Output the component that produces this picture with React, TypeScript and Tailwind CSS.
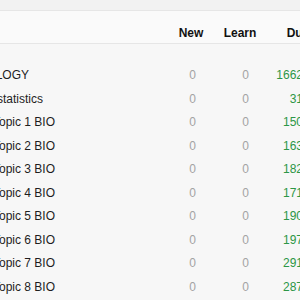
const decks = [
  { name: "BIOLOGY", shift: "ml-[-25px]", due: 1662 },
  { name: "statistics", shift: "ml-[-3px]", due: 31 },
  { name: "Topic 1 BIO", shift: "ml-[-7px]", due: 150 },
  { name: "Topic 2 BIO", shift: "ml-[-7px]", due: 163 },
  { name: "Topic 3 BIO", shift: "ml-[-7px]", due: 182 },
  { name: "Topic 4 BIO", shift: "ml-[-7px]", due: 171 },
  { name: "Topic 5 BIO", shift: "ml-[-7px]", due: 190 },
  { name: "Topic 6 BIO", shift: "ml-[-7px]", due: 197 },
  { name: "Topic 7 BIO", shift: "ml-[-7px]", due: 291 },
  { name: "Topic 8 BIO", shift: "ml-[-7px]", due: 287 },
];

export default function App() {
  return (
    <div className="h-[300px] w-[300px] overflow-hidden bg-[#f7f7f7] font-['Liberation_Sans',Arial,sans-serif] text-[12px] text-[#1e1e1e]">
      <div className="h-[10px] bg-[#f2f2f2]" />

      {/* column headers */}
      <div className="h-[34px] border-y border-[#e6e6e6] bg-[#fafafa] pt-[14px]">
        <div className="flex w-[340px] font-bold leading-[16px] text-[#111]">
          <div className="w-[166px]" />
          <div className="w-[50px] text-center">New</div>
          <div className="w-[48px] text-center">Learn</div>
          <div className="w-[68px] text-center">Due</div>
        </div>
      </div>

      {/* deck rows */}
      <div className="pt-[20px]">
        {decks.map((d) => (
          <div key={d.name} className="flex h-[23.5px] w-[340px] items-center leading-[23.5px]">
            <div className="w-[166px] whitespace-nowrap">
              <span className={d.shift + " inline-block"}>{d.name}</span>
            </div>
            <div className="w-[50px] pr-[20px] text-right text-[#a3a3a3]">0</div>
            <div className="w-[48px] pr-[15px] text-right text-[#a3a3a3]">0</div>
            <div className="w-[68px] pr-[29px] text-right text-[#2c9646]">{d.due}</div>
          </div>
        ))}
      </div>
    </div>
  );
}
